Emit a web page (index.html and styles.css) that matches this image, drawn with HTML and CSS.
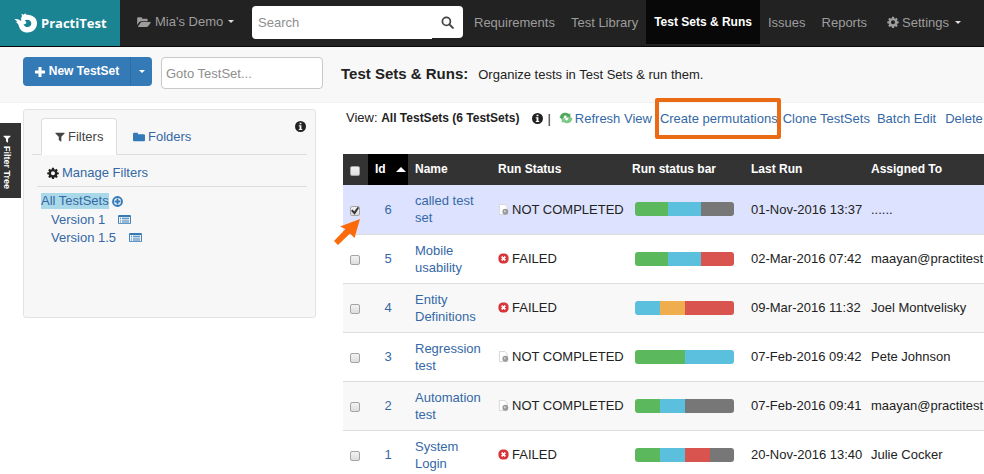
FILE: index.html
```html
<!DOCTYPE html>
<html lang="en">
<head>
<meta charset="utf-8">
<title>PractiTest - Test Sets &amp; Runs</title>
<link rel="stylesheet" href="styles.css">
</head>
<body>
<svg class="sprite" aria-hidden="true">
  <symbol id="folder-open" viewBox="0 0 16 14"><path d="M0 10.5V3c0-.9.6-1.5 1.5-1.5h2.800c.9 0 1.500.6 1.500 1.500v.3h5c.9 0 1.500.6 1.500 1.500V6H5c-1 0-2 .5-2.700 1.300zM1 12.300l3-4.400C4.300 7.400 4.900 7 5.500 7h9.700c.8 0 1 .5.6 1l-3 4c-.4.5-1 .8-1.600.8H1.500c-.6 0-.8-.2-.5-.5z"/></symbol>
  <symbol id="folder" viewBox="0 0 14 14"><path d="M0 3.500C0 2.500.7 2 1.600 2h2.800c.9 0 1.500.6 1.500 1.500v.3h6.400c.9 0 1.700.6 1.700 1.500v5.200c0 .9-.7 1.500-1.600 1.500H1.600C.7 12 0 11.400 0 10.500z"/></symbol>
  <symbol id="gear" viewBox="0 0 16 16"><path fill-rule="evenodd" d="M6.700 1h2.600l.4 2 1.100.5 1.700-1.200 1.900 1.900-1.200 1.700.5 1.100 2 .4v2.300l-2 .4-.5 1.100 1.200 1.800-1.900 1.800-1.700-1.200-1.100.5-.4 2H6.700l-.4-2-1.100-.5-1.700 1.200L1.600 13l1.200-1.800-.5-1.100-2-.4V7.400l2-.4.5-1.100-1.200-1.700 1.900-1.900 1.700 1.200 1.100-.5zM8 5.700a2.700 2.700 0 1 0 0 5.400 2.700 2.700 0 0 0 0-5.400z"/></symbol>
  <symbol id="search" viewBox="0 0 14 14"><circle cx="5.800" cy="5.800" r="4.300" fill="none" stroke="currentColor" stroke-width="1.900"/><path d="M9 9l3.800 3.800" fill="none" stroke="currentColor" stroke-width="2.200" stroke-linecap="round"/></symbol>
  <symbol id="plus" viewBox="0 0 12 12"><path d="M4.500 1h3v3.500H11v3H7.500V11h-3V7.500H1v-3h3.500z"/></symbol>
  <symbol id="filter" viewBox="0 0 12 12"><path d="M1 1h10c.6 0 .8.500.4.9L7.600 5.800V11c0 .5-.4.600-.8.300L4.900 9.800c-.3-.3-.4-.5-.4-.8V5.800L.6 1.900C.2 1.500.4 1 1 1z"/></symbol>
  <symbol id="info" viewBox="0 0 12 12"><path fill-rule="evenodd" d="M6 0a6 6 0 1 1 0 12A6 6 0 0 1 6 0zM5 1.800v1.700h2V1.800zM4.100 4.600v1.100H5v3H4.100v1.200h3.800V8.700H7V4.600z"/></symbol>
  <symbol id="plus-circle" viewBox="0 0 12 12"><circle cx="6" cy="6" r="4.900" fill="none" stroke="currentColor" stroke-width="2"/><path d="M5 2.800h2V5h2.200v2H7v2.200H5V7H2.800V5H5z"/></symbol>
  <symbol id="list" viewBox="0 0 14 12"><path fill-rule="evenodd" d="M1.200 1h11.600c.6 0 1.200.5 1.200 1.200v7.600c0 .7-.6 1.200-1.200 1.200H1.200C.6 11 0 10.500 0 9.800V2.200C0 1.500.6 1 1.200 1zM1 3.400V10h12V3.400zM2 4.200h1.200v1H2zM4.200 4.200H12v1H4.200zM2 6.200h1.200v1H2zM4.200 6.200H12v1H4.200zM2 8.200h1.200v1H2zM4.200 8.200H12v1H4.200z"/></symbol>
  <symbol id="refresh" viewBox="0 0 16 14"><path fill="#4fa85c" d="M1 5.500C1.500 2.500 4 .8 7 .8c2 0 3.500.6 4.600 1.700L13 1.200V6.500H7.700l1.500-1.600C7.700 3.800 6 4 5 5.500h1.500L3.200 8.800 0 5.500z"/><path fill="#7cc687" d="M15 8.500c-.5 3-3 4.700-6 4.700-2 0-3.500-.6-4.600-1.700L3 12.800V7.500h5.300L6.800 9.100c1.500 1.100 3.200.9 4.200-.6H9.500l3.300-3.300L16 8.500z"/></symbol>
  <symbol id="pending" viewBox="0 0 12 14"><path fill="#fff" stroke="#d4d4d4" d="M1.500 1.500h6l2.500 2.500v8.500h-8.500z"/><circle cx="8" cy="9.500" r="3.200" fill="#999"/><path fill="#d4d4d4" d="M6.500 8h2v2h-2z"/></symbol>
  <symbol id="failed" viewBox="0 0 12 12"><rect x=".5" y=".5" width="11" height="11" rx="4.500" fill="#d8343a"/><path d="M4 4l4 4M8 4L4 8" stroke="#fff" stroke-width="2"/></symbol>
</svg>

<header class="topbar">
  <a class="brand" href="#">
    <svg class="brand-mark" viewBox="0 0 24 20" aria-hidden="true"><path d="M.5 6.200C3 5.700 5 6.500 7.200 8 7 5.500 7.300 3.900 8.200 3L7.200.8l2.700 1L11 .2l1.500 1.500c6-.4 10.500 3.300 10.500 8.300 0 5.500-4 9.500-9.500 9.500-5 0-7.600-2.500-8.600-6.500C4.400 11 3 9.600 1.500 9l2-.3z" fill="#fff"/><path d="M10.500 7.500c2.500-1.700 6.500-.5 6.800 2.500.3 3-2.500 4.600-5 3.900-1.500-.5-2.500-1.500-2.700-2.900 1.200.4 2.300.1 2.600-.9.300-1.100-.4-2-1.700-2.600z" fill="#1a8493"/></svg>
    <span>PractiTest</span>
  </a>
  <button class="project" type="button"><svg class="ic-folder-open"><use href="#folder-open"/></svg>Mia's Demo<i class="caret"></i></button>
  <form class="search">
    <input type="search" placeholder="Search" aria-label="Search">
    <button type="button" aria-label="Run search"><svg class="ic-search"><use href="#search"/></svg></button>
  </form>
  <nav class="menu">
    <a href="#">Requirements</a>
    <a href="#">Test Library</a>
    <a href="#" class="active" aria-current="page">Test Sets &amp; Runs</a>
    <a href="#">Issues</a>
    <a href="#">Reports</a>
    <a href="#" class="settings"><svg class="ic-gear"><use href="#gear"/></svg>Settings<i class="caret"></i></a>
  </nav>
</header>

<section class="pagehead">
  <div class="split">
    <button type="button" class="new"><svg class="ic-plus"><use href="#plus"/></svg>New TestSet</button>
    <button type="button" class="more" aria-label="More options"><i class="caret"></i></button>
  </div>
  <input class="goto" type="text" placeholder="Goto TestSet..." aria-label="Goto TestSet">
  <h1>Test Sets &amp; Runs:</h1>
  <p>Organize tests in Test Sets &amp; run them.</p>
</section>

<div class="content">
  <button type="button" class="treetab"><svg class="ic-filter"><use href="#filter"/></svg>Filter Tree</button>
  <aside class="panel">
    <div class="tabs">
      <a href="#" class="tab on"><svg class="ic-filter"><use href="#filter"/></svg>Filters</a>
      <a href="#" class="tab"><svg class="ic-folder"><use href="#folder"/></svg>Folders</a>
      <svg class="ic-info"><use href="#info"/></svg>
    </div>
    <div class="manage"><svg class="ic-gear"><use href="#gear"/></svg><a href="#">Manage Filters</a></div>
    <ul class="tree">
      <li><a href="#" class="picked">All TestSets</a><svg class="ic-info"><use href="#plus-circle"/></svg></li>
      <li class="child"><a href="#">Version 1</a><svg class="ic-list"><use href="#list"/></svg></li>
      <li class="child"><a href="#">Version 1.5</a><svg class="ic-list"><use href="#list"/></svg></li>
    </ul>
  </aside>

  <main class="main">
    <div class="viewbar">
      <span class="view">View: <b>All TestSets (6 TestSets)</b></span>
      <svg class="ic-info"><use href="#info"/></svg>
      <span class="bar-sep">|</span>
      <a href="#" class="refresh"><svg class="ic-refresh"><use href="#refresh"/></svg>Refresh View</a>
      <a href="#" class="permute">Create permutations</a>
      <a href="#">Clone TestSets</a>
      <a href="#" class="batch">Batch Edit</a>
      <a href="#">Delete</a>
    </div>
    <table class="grid">
      <colgroup><col class="c-check"><col class="c-id"><col class="c-name"><col class="c-status"><col class="c-bar"><col class="c-last"><col></colgroup>
      <thead>
        <tr><th class="check"><input type="checkbox" aria-label="Select all"></th><th class="sorted"><span>Id<i class="up"></i></span></th><th>Name</th><th>Run Status</th><th>Run status bar</th><th>Last Run</th><th>Assigned To</th></tr>
      </thead>
      <tbody>
        <tr class="selected">
          <td class="check"><input type="checkbox" checked aria-label="Select 6"><svg class="pointer" viewBox="0 0 28 28" aria-hidden="true"><path d="M27 1L21.500 20 17 15.500 5 27 1 23 12.500 11 7 8.500z" fill="#fb6b0b"/></svg></td>
          <td class="id"><a href="#">6</a></td><td><a href="#">called test set</a></td>
          <td><span class="status"><svg class="ic-pending"><use href="#pending"/></svg>NOT COMPLETED</span></td>
          <td><div class="runbar"><i class="green" style="flex-grow:33"></i><i class="blue" style="flex-grow:33"></i><i class="gray" style="flex-grow:33"></i></div></td>
          <td class="line">01-Nov-2016 13:37</td><td class="line">......</td>
        </tr>
        <tr>
          <td class="check"><input type="checkbox" aria-label="Select 5"></td>
          <td class="id"><a href="#">5</a></td><td><a href="#">Mobile usability</a></td>
          <td><span class="status"><svg class="ic-failed"><use href="#failed"/></svg>FAILED</span></td>
          <td><div class="runbar"><i class="green" style="flex-grow:33"></i><i class="blue" style="flex-grow:33"></i><i class="red" style="flex-grow:33"></i></div></td>
          <td class="line">02-Mar-2016 07:42</td><td class="line">maayan@practitest</td>
        </tr>
        <tr>
          <td class="check"><input type="checkbox" aria-label="Select 4"></td>
          <td class="id"><a href="#">4</a></td><td><a href="#">Entity Definitions</a></td>
          <td><span class="status"><svg class="ic-failed"><use href="#failed"/></svg>FAILED</span></td>
          <td><div class="runbar"><i class="blue" style="flex-grow:25"></i><i class="orange" style="flex-grow:25"></i><i class="red" style="flex-grow:50"></i></div></td>
          <td class="line">09-Mar-2016 11:32</td><td class="line">Joel Montvelisky</td>
        </tr>
        <tr>
          <td class="check"><input type="checkbox" aria-label="Select 3"></td>
          <td class="id"><a href="#">3</a></td><td><a href="#">Regression test</a></td>
          <td><span class="status"><svg class="ic-pending"><use href="#pending"/></svg>NOT COMPLETED</span></td>
          <td><div class="runbar"><i class="green" style="flex-grow:50"></i><i class="blue" style="flex-grow:50"></i></div></td>
          <td class="line">07-Feb-2016 09:42</td><td class="line">Pete Johnson</td>
        </tr>
        <tr>
          <td class="check"><input type="checkbox" aria-label="Select 2"></td>
          <td class="id"><a href="#">2</a></td><td><a href="#">Automation test</a></td>
          <td><span class="status"><svg class="ic-pending"><use href="#pending"/></svg>NOT COMPLETED</span></td>
          <td><div class="runbar"><i class="green" style="flex-grow:25"></i><i class="blue" style="flex-grow:25"></i><i class="gray" style="flex-grow:50"></i></div></td>
          <td class="line">07-Feb-2016 09:41</td><td class="line">maayan@practitest</td>
        </tr>
        <tr>
          <td class="check"><input type="checkbox" aria-label="Select 1"></td>
          <td class="id"><a href="#">1</a></td><td><a href="#">System Login</a></td>
          <td><span class="status"><svg class="ic-failed"><use href="#failed"/></svg>FAILED</span></td>
          <td><div class="runbar"><i class="green" style="flex-grow:25"></i><i class="blue" style="flex-grow:25"></i><i class="red" style="flex-grow:26"></i><i class="gray" style="flex-grow:24"></i></div></td>
          <td class="line">20-Nov-2016 13:40</td><td class="line">Julie Cocker</td>
        </tr>
      </tbody>
    </table>
  </main>
</div>
</body>
</html>
```
FILE: styles.css
```css
* { box-sizing: border-box; }
html { overflow-x: hidden; scrollbar-width: none; }
body {
  margin: 0;
  background: #fff;
  color: #222;
  font: 13px/17px "Liberation Sans", Arial, sans-serif;
}
a { color: #3568a5; text-decoration: none; }
button, input { font: inherit; }
button { padding: 0; border: 0; cursor: pointer; }
svg { flex: none; fill: currentColor; }
.sprite { display: none; }

.ic-folder-open { width: 14px; height: 12px; }
.ic-folder { width: 12px; height: 12px; }
.ic-gear { width: 12px; height: 12px; }
.ic-search { width: 13px; height: 13px; }
.ic-plus { width: 12px; height: 12px; }
.ic-filter { width: 10px; height: 10px; }
.ic-info { width: 11px; height: 11px; }
.ic-list { width: 13px; height: 11px; }
.ic-refresh { width: 14px; height: 12px; }
.ic-pending { width: 11px; height: 13px; }
.ic-failed { width: 11px; height: 11px; }

.caret {
  border: 3px solid transparent;
  border-top-color: currentColor;
  border-bottom: 0;
}

/* Top bar */
.topbar {
  display: flex;
  height: 47px;
  background: #222;
  border-bottom: 1px solid #080808;
  color: #9d9d9d;
}
.brand {
  display: flex;
  flex: none;
  align-items: center;
  gap: 3px;
  width: 120px;
  padding-left: 14px;
  background: #1a8493;
  color: #fff;
  font: bold 13px/18px "Open Sans", sans-serif;
}
.brand-mark { width: 24px; height: 20px; }
.project {
  display: flex;
  flex: none;
  align-items: center;
  gap: 4px;
  width: 132px;
  height: 43px;
  padding-left: 17px;
  background: none;
  color: inherit;
}
.project .caret { margin-left: 1px; color: #ddd; }
.settings .caret { margin-left: 3px; color: #ddd; }
.search { display: flex; flex: none; width: 211px; height: 33px; margin-top: 6px; }
.search input {
  width: 180px;
  padding: 0 6px;
  border: 0;
  border-radius: 4px 0 0 4px;
  background: #fff;
}
input::placeholder { color: #8e8e8e; opacity: 1; }
.search button {
  display: flex;
  align-items: center;
  justify-content: center;
  width: 31px;
  height: 32px;
  border-radius: 0 4px 4px 0;
  background: #fff;
  color: #444;
}
.menu { display: flex; flex: none; height: 44px; padding-left: 3px; }
.menu a {
  display: flex;
  align-items: center;
  padding: 0 8px;
  color: #9d9d9d;
  white-space: nowrap;
}
.menu .active { background: #080808; color: #fff; font-size: 12px; font-weight: bold; }
.menu .settings { gap: 3px; padding-left: 12px; }

/* Page heading */
.pagehead {
  display: flex;
  height: 56px;
  padding: 10px 0 0 23px;
  background: #f8f8f8;
  border-bottom: 1px solid #f2f2f2;
}
.split { display: flex; flex: none; width: 129px; height: 29px; color: #fff; }
.split button {
  display: flex;
  align-items: center;
  justify-content: center;
  gap: 3px;
  background: #337ab7;
  color: inherit;
  font-size: 12px;
  font-weight: bold;
  white-space: nowrap;
}
.split .new { flex: 1; border-radius: 4px 0 0 4px; }
.split .more { width: 22px; border-left: 1px solid #2e6da4; border-radius: 0 4px 4px 0; }
.goto {
  width: 162px;
  height: 32px;
  margin-left: 9px;
  padding: 0 4px;
  border: 1px solid #c8c8c8;
  border-radius: 4px;
  background: #fff;
}
h1 { margin: 7px 10px 0 18px; font-size: 15px; line-height: 19px; white-space: nowrap; }
.pagehead p { margin: 9px 0 0; white-space: nowrap; }

/* Filter panel */
.content { display: flex; align-items: flex-start; }
.treetab {
  display: flex;
  flex: none;
  align-items: center;
  gap: 3px;
  width: 21px;
  height: 75px;
  margin: 20px 2px 0 0;
  padding: 12px 7px 0 0;
  background: #333;
  color: #fff;
  font-size: 9px;
  line-height: 14px;
  font-weight: bold;
  writing-mode: vertical-rl;
  white-space: nowrap;
}
.treetab .ic-filter { width: 8px; height: 8px; }
.panel {
  flex: none;
  width: 293px;
  height: 209px;
  margin-top: 6px;
  padding: 8px;
  background: #f7f7f7;
  border: 1px solid #e3e3e3;
  border-radius: 3px;
}
.tabs { display: flex; height: 37px; padding-left: 9px; border-bottom: 1px solid #ddd; }
.tab { display: flex; align-items: center; gap: 3px; height: 37px; padding: 0 16px; }
.tab .ic-folder { color: #337ab7; }
.tab.on {
  width: 76px;
  padding: 0 0 0 13px;
  background: #fff;
  border: 1px solid #ddd;
  border-bottom-color: #fff;
  border-radius: 4px 4px 0 0;
  color: #444;
}
.tabs .ic-info { margin: 3px 1px 0 auto; color: #222; }
.manage {
  display: flex;
  align-items: center;
  gap: 3px;
  height: 32px;
  margin-left: 5px;
  padding: 4px 0 0 10px;
  border-bottom: 1px solid #ddd;
}
.tree { margin: 5px 0 0 9px; padding: 0; list-style: none; }
.tree li { display: flex; align-items: center; gap: 3px; height: 18px; color: #337ab7; }
.tree .child { gap: 13px; padding-left: 10px; }
.picked { background: #a9d9e9; line-height: 16px; }

/* View bar */
.main { flex: 1; min-width: 0; padding-left: 27px; }
.viewbar { display: flex; align-items: center; height: 30px; margin-bottom: 21px; padding-left: 3px; white-space: nowrap; }
.viewbar > * { flex: none; }
.viewbar b { font-size: 12px; }
.viewbar .ic-info { margin-left: 13px; }
.bar-sep { margin: 0 8px 0 4px; }
.refresh { display: flex; align-items: center; gap: 2px; }
.permute { position: relative; margin: 0 5px 0 8px; }
.permute::after {
  content: "";
  position: absolute;
  inset: -12px -3px -12px -5px;
  border: 4px solid #ea6b14;
  border-radius: 2px;
}
.batch { margin: 0 9px 0 7px; }

/* Test set table */
.grid { width: 100%; table-layout: fixed; border-collapse: collapse; }
.c-check { width: 25px; }
.c-id { width: 40px; }
.c-name { width: 83px; }
.c-status { width: 134px; }
.c-bar { width: 119px; }
.c-last { width: 120px; }
th, td { padding: 0 7px; text-align: left; vertical-align: middle; }
th { height: 31px; background: #333; color: #fff; font-size: 12px; white-space: nowrap; }
th.sorted { background: #000; }
.sorted span { display: flex; align-items: center; justify-content: space-between; margin-right: -5px; }
.up { border: 5px solid transparent; border-bottom-color: #fff; border-top: 0; }
td { height: 49px; border-bottom: 1px solid #ddd; }
td.line { padding-right: 0; white-space: nowrap; }
tbody tr:nth-child(odd) { background: #f8f8f8; }
tbody tr:last-child, tbody tr:nth-child(even) { background: #fff; }
tbody tr.selected { background: #dde3ff; }
td.id { text-align: center; }
.check { position: relative; }
.status { display: flex; align-items: center; gap: 3px; white-space: nowrap; }
.check input {
  display: block;
  appearance: none;
  width: 10px;
  height: 10px;
  margin: 3px 0 0;
  border: 1px solid #a5a5a5;
  border-radius: 2px;
  background: linear-gradient(#f2f2f2, #dedede);
}
.check input:checked::before {
  content: "";
  display: block;
  width: 8px;
  height: 8px;
  background: #333;
  clip-path: polygon(0 50%, 20% 35%, 40% 60%, 85% 0, 100% 15%, 45% 100%);
}
.pointer { position: absolute; top: 33px; left: -10px; width: 28px; height: 28px; }
.runbar { display: flex; height: 14px; margin: 0 3px; border-radius: 3px; overflow: hidden; }
.runbar i { flex-basis: 0; }
.green { background: #5cb85c; }
.blue { background: #5bc0de; }
.orange { background: #f0ad4e; }
.red { background: #d9534f; }
.gray { background: #777; }
```
